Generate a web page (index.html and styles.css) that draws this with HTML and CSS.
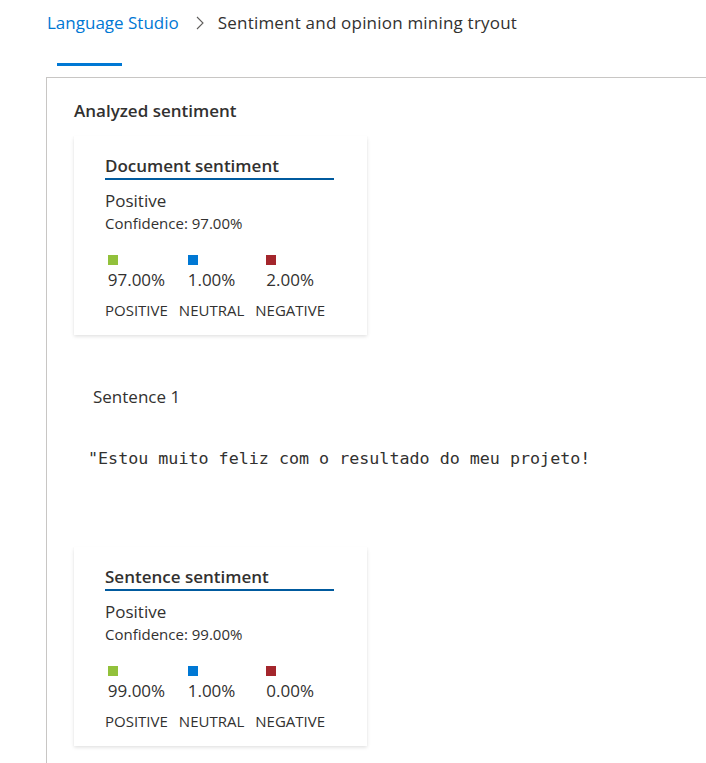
FILE: index.html
```html
<!DOCTYPE html>
<html lang="en">
<head>
<meta charset="utf-8">
<title>Sentiment and opinion mining tryout</title>
<link rel="stylesheet" href="styles.css">
</head>
<body>
<nav class="breadcrumb">
  <a class="crumb-link" href="#">Language Studio</a>
  <svg class="chevron" width="8" height="14" viewBox="0 0 8 14"><path d="M1 1l6 6-6 6" fill="none" stroke="#605e5c" stroke-width="1.1"/></svg>
  <span class="crumb-current">Sentiment and opinion mining tryout</span>
</nav>
<div class="tabs"><div class="tab-active"></div></div>
<main class="panel">
  <h2 class="section-title">Analyzed sentiment</h2>
  <div class="card">
    <h3 class="card-title">Document sentiment</h3>
    <div class="label-main">Positive</div>
    <div class="confidence">Confidence: 97.00%</div>
    <div class="scores">
      <div class="score"><div class="score-inner"><span class="swatch pos"></span><span class="pct">97.00%</span></div><span class="score-label">POSITIVE</span></div>
      <div class="score"><div class="score-inner"><span class="swatch neu"></span><span class="pct">1.00%</span></div><span class="score-label">NEUTRAL</span></div>
      <div class="score"><div class="score-inner"><span class="swatch neg"></span><span class="pct">2.00%</span></div><span class="score-label">NEGATIVE</span></div>
    </div>
  </div>
  <div class="sentence-head">Sentence 1</div>
  <div class="sentence-text">"Estou muito feliz com o resultado do meu projeto!</div>
  <div class="card card-sentence">
    <h3 class="card-title">Sentence sentiment</h3>
    <div class="label-main">Positive</div>
    <div class="confidence">Confidence: 99.00%</div>
    <div class="scores">
      <div class="score"><div class="score-inner"><span class="swatch pos"></span><span class="pct">99.00%</span></div><span class="score-label">POSITIVE</span></div>
      <div class="score"><div class="score-inner"><span class="swatch neu"></span><span class="pct">1.00%</span></div><span class="score-label">NEUTRAL</span></div>
      <div class="score"><div class="score-inner"><span class="swatch neg"></span><span class="pct">0.00%</span></div><span class="score-label">NEGATIVE</span></div>
    </div>
  </div>
</main>
</body>
</html>
```
FILE: styles.css
```css
* { box-sizing: border-box; }
html, body { margin: 0; padding: 0; background: #fff; }
body {
  font-family: "Segoe UI", "Open Sans", "Noto Sans", sans-serif;
  color: #323130;
  overflow: hidden;
  height: 763px;
}
.breadcrumb {
  display: flex;
  align-items: center;
  padding: 10px 0 0 47px;
  height: 36px;
  font-size: 17px;
  line-height: 24px;
}
.crumb-link { color: #0078d4; text-decoration: none; }
.chevron { margin: 0 14px 0 17px; }
.crumb-current { color: #323130; letter-spacing: 0.2px; }
.tabs {
  padding: 27px 0 0 57px;
  height: 41px;
}
.tab-active { width: 65px; height: 3px; background: #0078d4; }
.panel {
  margin-left: 46px;
  border-top: 1px solid #c8c6c4;
  border-left: 1px solid #c8c6c4;
  padding: 21px 0 40px 27px;
  min-height: 700px;
}
.section-title {
  margin: 0 0 13px;
  font-size: 17px;
  font-weight: 600;
  line-height: 24px;
}
.card {
  width: 293px;
  padding: 18px 33px 15px 31px;
  background: #fff;
  box-shadow: 0 1.6px 3.6px rgba(0,0,0,0.13), 0 0.3px 0.9px rgba(0,0,0,0.11);
}
.card-title {
  margin: 0;
  font-size: 17px;
  font-weight: 600;
  line-height: 24px;
  border-bottom: 2px solid #005a9e;
  padding-bottom: 0;
}
.label-main { margin-top: 9px; font-size: 17px; line-height: 24px; }
.confidence { font-size: 15px; line-height: 20px; }
.scores { display: flex; gap: 11px; margin-top: 22px; }
.score { display: flex; flex-direction: column; align-items: center; }
.score-inner { display: flex; flex-direction: column; align-items: flex-start; }
.swatch { width: 10px; height: 10px; display: block; }
.swatch.pos { background: #92c13b; }
.swatch.neu { background: #0078d4; }
.swatch.neg { background: #a4262c; }
.pct { font-size: 17px; line-height: 24px; margin-top: 3px; }
.score-label { font-size: 15px; line-height: 20px; margin-top: 8px; }
.sentence-head {
  margin: 50px 0 0 19px;
  font-size: 17px;
  line-height: 24px;
}
.sentence-text {
  margin: 38px 0 0 14px;
  font-family: "DejaVu Sans Mono", "Liberation Mono", monospace;
  font-size: 16.7px;
  line-height: 22px;
  color: #323130;
}
.card-sentence { margin-top: 78px; }
```
